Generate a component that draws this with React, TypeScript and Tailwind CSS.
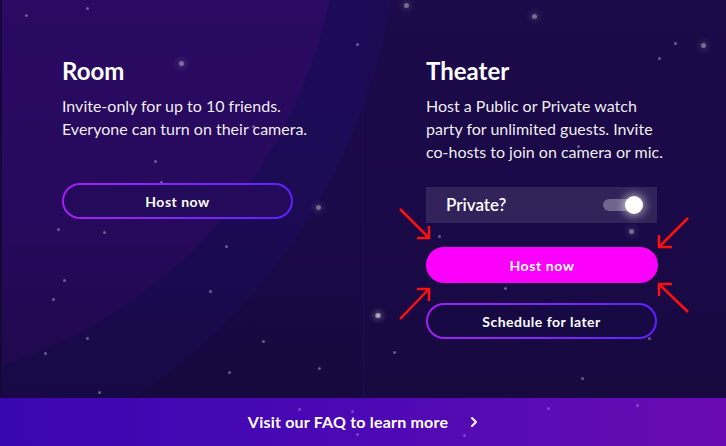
import { ChevronRight } from "lucide-react";

const stars: [number, number, number][] = [
  [26, 15, 1], [87, 8, 1], [181, 63, 2], [357, 44, 1], [155, 161, 1], [161, 182, 1],
  [318, 207, 2], [226, 246, 1], [210, 291, 1], [263, 341, 1], [229, 372, 1], [319, 368, 1],
  [378, 315, 2], [253, 126, 1], [58, 229, 1], [104, 232, 1], [64, 280, 1], [53, 299, 1],
  [87, 338, 1], [45, 353, 1], [99, 392, 1], [406, 5, 2], [534, 16, 2], [675, 43, 1],
  [703, 45, 2], [659, 58, 1], [578, 146, 1], [439, 236, 1], [631, 231, 2], [505, 288, 1],
  [377, 315, 2], [394, 352, 1], [649, 338, 1], [582, 378, 1], [534, 304, 1],
  [299, 409, 1], [352, 411, 1], [357, 434, 1], [548, 408, 1], [637, 405, 1], [464, 435, 1],
];

const GradientButton = ({ children, inner, width }: { children: string; inner: string; width: string }) => (
  <div className={`${width} h-[36px] rounded-full p-[2px] bg-gradient-to-r from-[#a21ff2] to-[#5b22ff]`}>
    <div
      className={`flex h-full w-full items-center justify-center rounded-full ${inner} text-[14px] font-bold tracking-[0.5px] text-white`}
    >
      {children}
    </div>
  </div>
);

const App = () => {
  return (
    <div className="relative h-[446px] w-[726px] overflow-hidden bg-[#1c0a4a] font-['Lato','Noto_Sans',sans-serif] text-white">
      {/* background arcs */}
      <div className="absolute left-[-800px] top-[-700px] h-[1200px] w-[1200px] rounded-full bg-[#1d0b58]" />
      <div className="absolute left-[-640px] top-[-590px] h-[980px] w-[980px] rounded-full bg-[#2a0a62]" />
      <div className="absolute inset-0 bg-gradient-to-b from-transparent via-[#12063a]/15 to-[#10062f]/55" />
      <div className="absolute left-[363px] top-0 h-[398px] w-[363px] border-l border-[#1e0c5a] bg-[#1c0a48]/25" />
      <div className="absolute left-0 top-0 h-[398px] w-[2px] bg-[#150838]" />

      {stars.map(([x, y, s], i) => (
        <div
          key={i}
          className={
            s === 2
              ? "absolute h-[5px] w-[5px] rounded-full bg-white/40 shadow-[0_0_6px_2px_rgba(255,255,255,0.15)]"
              : "absolute h-[3px] w-[3px] rounded-full bg-white/35"
          }
          style={{ left: x - (s === 2 ? 2 : 1), top: y - (s === 2 ? 2 : 1) }}
        />
      ))}

      <main className="relative grid h-[398px] grid-cols-2">
        <section className="pl-[62px] pt-[56px]">
          <h2 className="text-[24px] font-bold leading-[30px]">Room</h2>
          <p className="mt-[8px] text-[16px] leading-[23px] text-white/95">
            Invite-only for up to 10 friends.
            <br />
            Everyone can turn on their camera.
          </p>
          <div className="mt-[43px]">
            <GradientButton width="w-[231px]" inner="bg-[#230a5a]">
              Host now
            </GradientButton>
          </div>
        </section>

        <section className="pl-[63px] pt-[56px]">
          <h2 className="text-[24px] font-bold leading-[30px]">Theater</h2>
          <p className="mt-[8px] text-[16px] leading-[23px] text-white/95">
            Host a Public or Private watch
            <br />
            party for unlimited guests. Invite
            <br />
            co-hosts to join on camera or mic.
          </p>
          <div className="mt-[24px] flex h-[36px] w-[231px] items-center justify-between bg-white/10 pl-[20px] pr-[16px]">
            <span className="text-[17px] font-semibold">Private?</span>
            <div className="relative h-[12px] w-[38px] rounded-full bg-white/30">
              <div className="absolute right-[-2px] top-[-3px] h-[18px] w-[18px] rounded-full bg-white shadow-[0_0_8px_2px_rgba(255,255,255,0.55)]" />
            </div>
          </div>
          <button className="mt-[24px] flex h-[36px] w-[232px] items-center justify-center rounded-full bg-[#fb00fb] text-[14px] font-bold tracking-[0.6px] text-white">
            Host now
          </button>
          <div className="mt-[20px]">
            <GradientButton width="w-[231px]" inner="bg-[#170a44]">
              Schedule for later
            </GradientButton>
          </div>
        </section>
      </main>

      <footer className="relative flex h-[48px] items-center justify-center gap-[18px] bg-gradient-to-r from-[#3a06b0] via-[#4c08b4] to-[#6a0ab2]">
        <span className="pl-[4px] text-[16px] font-bold tracking-[0.2px]">Visit our FAQ to learn more</span>
        <ChevronRight size={16} strokeWidth={3} />
      </footer>

      {stars
        .filter(([, y]) => y > 398)
        .map(([x, y], i) => (
          <div
            key={`f${i}`}
            className="absolute h-[3px] w-[3px] rounded-full bg-white/25"
            style={{ left: x - 1, top: y - 1 }}
          />
        ))}

      {/* annotation arrows */}
      <svg className="pointer-events-none absolute left-0 top-0" width={726} height={446}>
        <g stroke="#ff1010" strokeWidth={2.5} fill="none" strokeLinecap="butt">
          <line x1={400} y1={209} x2={429} y2={238} />
          <polyline points="417,238 429,238 429,226" />
          <line x1={688} y1={218} x2={660} y2={246} />
          <polyline points="672,247 659,247 659,235" />
          <line x1={400} y1={319} x2={429} y2={289} />
          <polyline points="417,289 429,289 429,301" />
          <line x1={688} y1={312} x2={660} y2={285} />
          <polyline points="672,284 659,284 659,296" />
        </g>
      </svg>
    </div>
  );
};

export default App;
